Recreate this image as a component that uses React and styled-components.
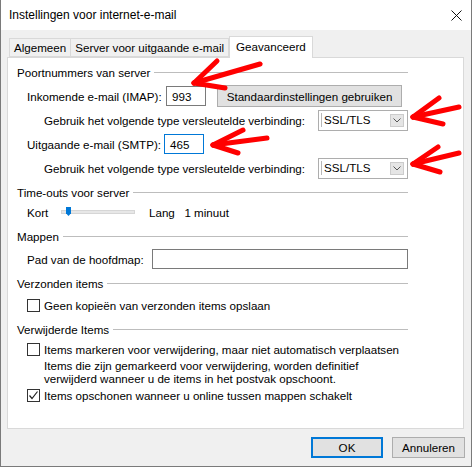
import React from 'react';
import styled, { createGlobalStyle } from 'styled-components';

const Global = createGlobalStyle`
  html, body {
    margin: 0;
    padding: 0;
    background: #ffffff;
  }
  body {
    font-family: "Liberation Sans", Arial, sans-serif;
    font-size: 11.6px;
    color: #000;
  }
`;

const Window = styled.div`
  position: relative;
  width: 472px;
  height: 467px;
  box-sizing: border-box;
  border: 1px solid #7a7a7a;
  border-top: none;
  background: #f0f0f0;
  display: flex;
  flex-direction: column;
  white-space: nowrap;
`;

const TitleBar = styled.div`
  height: 30px;
  background: #fff;
  display: flex;
  align-items: center;
  justify-content: space-between;
  padding: 0 9px 0 8px;
  font-size: 12px;
`;

const Body = styled.div`
  padding: 6px 7px 0 6px;
  display: flex;
  flex-direction: column;
`;

const TabRow = styled.div`
  display: flex;
  align-items: flex-end;
  height: 21px;
  padding-left: 2px;
  position: relative;
  z-index: 1;
`;

const Tab = styled.div`
  box-sizing: border-box;
  height: ${p => (p.$active ? '22px' : '19px')};
  margin-bottom: ${p => (p.$active ? '-1px' : '0')};
  padding: 0 ${p => (p.$active ? '6px' : '4px')};
  display: flex;
  align-items: ${p => (p.$active ? 'flex-start' : 'center')};
  padding-top: ${p => (p.$active ? '3px' : '0')};
  border: 1px solid #d9d9d9;
  border-bottom: ${p => (p.$active ? 'none' : '1px solid #d9d9d9')};
  border-left: ${p => (p.$first || p.$active ? '1px solid #d9d9d9' : 'none')};
  background: ${p => (p.$active ? '#fff' : '#f0f0f0')};
`;

const Panel = styled.div`
  box-sizing: border-box;
  height: 372px;
  background: #fff;
  border: 1px solid #d9d9d9;
  padding: 4px 55px 0 9px;
  display: flex;
  flex-direction: column;
  gap: 4px;
`;

const Section = styled.div`
  display: flex;
  flex-direction: column;
  gap: ${p => p.$gap}px;
`;

const Header = styled.div`
  height: 20px;
  display: flex;
  align-items: center;
  &::after {
    content: '';
    flex: 1;
    height: 1px;
    margin-left: 4px;
    background: #bdbdbd;
  }
`;

const Row = styled.div`
  height: 20px;
  display: flex;
  align-items: center;
  padding-left: ${p => p.$indent || 10}px;
`;

const Label = styled.span`
  width: ${p => p.$w}px;
  flex: none;
`;

const TextInput = styled.div`
  box-sizing: border-box;
  width: ${p => p.$w || 40}px;
  flex: ${p => (p.$grow ? 1 : 'none')};
  height: 20px;
  margin-left: ${p => p.$ml || 0}px;
  border: 1px solid ${p => (p.$focus ? '#0078d7' : '#7a7a7a')};
  background: #fff;
  display: flex;
  align-items: center;
  padding-left: 5px;
`;

const Button = styled.div`
  box-sizing: border-box;
  height: ${p => p.$h || 21}px;
  width: ${p => p.$w}px;
  margin-left: ${p => p.$ml || 0}px;
  display: flex;
  align-items: center;
  justify-content: center;
  background: #e1e1e1;
  border: ${p => (p.$default ? '2px solid #0078d7' : '1px solid #adadad')};
`;

const Select = styled.div`
  box-sizing: border-box;
  flex: none;
  width: 90px;
  height: 21px;
  margin-left: auto;
  border: 1px solid #adadad;
  background: #fff;
  display: flex;
  align-items: center;
  padding: 0 3px 0 2px;
  span {
    flex: 1;
    border-left: 1px solid #b8b8b8;
    padding-left: 2px;
    line-height: 14px;
  }
`;

const DropButton = styled.div`
  width: 14px;
  height: 13px;
  box-sizing: border-box;
  background: #e5e5e5;
  border: 1px solid #cccccc;
  display: flex;
  align-items: center;
  justify-content: center;
`;

const Track = styled.div`
  position: relative;
  box-sizing: border-box;
  width: 74px;
  height: 4px;
  margin: 0 14px 0 12px;
  background: #e7e7e7;
  border: 1px solid #d6d6d6;
`;

const Thumb = styled.div`
  position: absolute;
  left: 4px;
  top: -4px;
  width: 5px;
  height: 9px;
  background: #0078d7;
  clip-path: polygon(0 0, 100% 0, 100% 70%, 50% 100%, 0 70%);
`;

const Box = styled.div`
  box-sizing: border-box;
  flex: none;
  width: 13px;
  height: 13px;
  border: 1px solid #333;
  background: #fff;
  margin-right: 4px;
  display: flex;
  align-items: center;
  justify-content: center;
`;

const Desc = styled.div`
  padding-left: 27px;
  line-height: 13px;
`;

const Footer = styled.div`
  display: flex;
  justify-content: flex-end;
  gap: 9px;
  padding-top: 8px;
  margin-right: -1px;
`;

const Arrows = styled.svg`
  position: absolute;
  left: 0;
  top: 0;
  pointer-events: none;
`;

const arrows = [
  { tip: [193, 83], ends: [[216, 61], [259, 64], [224, 88]] },
  { tip: [412, 117], ends: [[438, 98], [458, 107], [442, 124]] },
  { tip: [212, 145], ends: [[242, 130], [266, 138], [237, 153]] },
  { tip: [412, 164], ends: [[437, 147], [458, 153], [439, 172]] },
];

const Chevron = () => (
  <svg width="8" height="5" viewBox="0 0 8 5">
    <polyline points="0.5,0.5 4,4 7.5,0.5" fill="none" stroke="#555" strokeWidth="1" />
  </svg>
);

const Check = ({ checked }) => (
  <Box>
    {checked && (
      <svg width="11" height="11" viewBox="0 0 11 11">
        <polyline points="1.5,5.5 4,8.5 9.5,1.5" fill="none" stroke="#222" strokeWidth="1.2" />
      </svg>
    )}
  </Box>
);

export default function App() {
  return (
    <>
      <Global />
      <Window>
        <TitleBar>
          <span>Instellingen voor internet-e-mail</span>
          <svg width="11" height="11" viewBox="0 0 11 11">
            <path d="M0.5 0.5 L10.5 10.5 M10.5 0.5 L0.5 10.5" stroke="#111" strokeWidth="1" />
          </svg>
        </TitleBar>
        <Body>
          <TabRow>
            <Tab $first>Algemeen</Tab>
            <Tab>Server voor uitgaande e-mail</Tab>
            <Tab $active>Geavanceerd</Tab>
          </TabRow>
          <Panel>
            <Section $gap={4}>
              <Header>Poortnummers van server</Header>
              <Row>
                <Label $w={139}>Inkomende e-mail (IMAP):</Label>
                <TextInput>993</TextInput>
                <Button $ml={11} $h={22} $w={185}>Standaardinstellingen gebruiken</Button>
              </Row>
              <Row $indent={27}>
                Gebruik het volgende type versleutelde verbinding:
                <Select><span>SSL/TLS</span><DropButton><Chevron /></DropButton></Select>
              </Row>
              <Row>
                <Label $w={137}>Uitgaande e-mail (SMTP):</Label>
                <TextInput $focus>465</TextInput>
              </Row>
              <Row $indent={27}>
                Gebruik het volgende type versleutelde verbinding:
                <Select><span>SSL/TLS</span><DropButton><Chevron /></DropButton></Select>
              </Row>
            </Section>
            <Section $gap={0}>
              <Header>Time-outs voor server</Header>
              <Row>
                <Label $w={22}>Kort</Label>
                <Track><Thumb /></Track>
                Lang&nbsp;&nbsp;&nbsp;1 minuut
              </Row>
            </Section>
            <Section $gap={3}>
              <Header>Mappen</Header>
              <Row>
                <Label $w={125}>Pad van de hoofdmap:</Label>
                <TextInput $grow />
              </Row>
            </Section>
            <Section $gap={2}>
              <Header>Verzonden items</Header>
              <Row>
                <Check />
                Geen kopieën van verzonden items opslaan
              </Row>
            </Section>
            <Section $gap={0}>
              <Header>Verwijderde Items</Header>
              <Row>
                <Check />
                Items markeren voor verwijdering, maar niet automatisch verplaatsen
              </Row>
              <Desc>
                Items die zijn gemarkeerd voor verwijdering, worden definitief
                <br />
                verwijderd wanneer u de items in het postvak opschoont.
              </Desc>
              <Row>
                <Check checked />
                Items opschonen wanneer u online tussen mappen schakelt
              </Row>
            </Section>
          </Panel>
          <Footer>
            <Button $default $w={72}>OK</Button>
            <Button $w={73}>Annuleren</Button>
          </Footer>
        </Body>
        <Arrows width="472" height="467" viewBox="0 0 472 467">
          {arrows.map((a, i) => (
            <g key={i} stroke="#ff0000" strokeWidth="5" strokeLinecap="round" fill="none">
              {a.ends.map((e, j) => (
                <line key={j} x1={a.tip[0]} y1={a.tip[1]} x2={e[0]} y2={e[1]} />
              ))}
            </g>
          ))}
        </Arrows>
      </Window>
    </>
  );
}
